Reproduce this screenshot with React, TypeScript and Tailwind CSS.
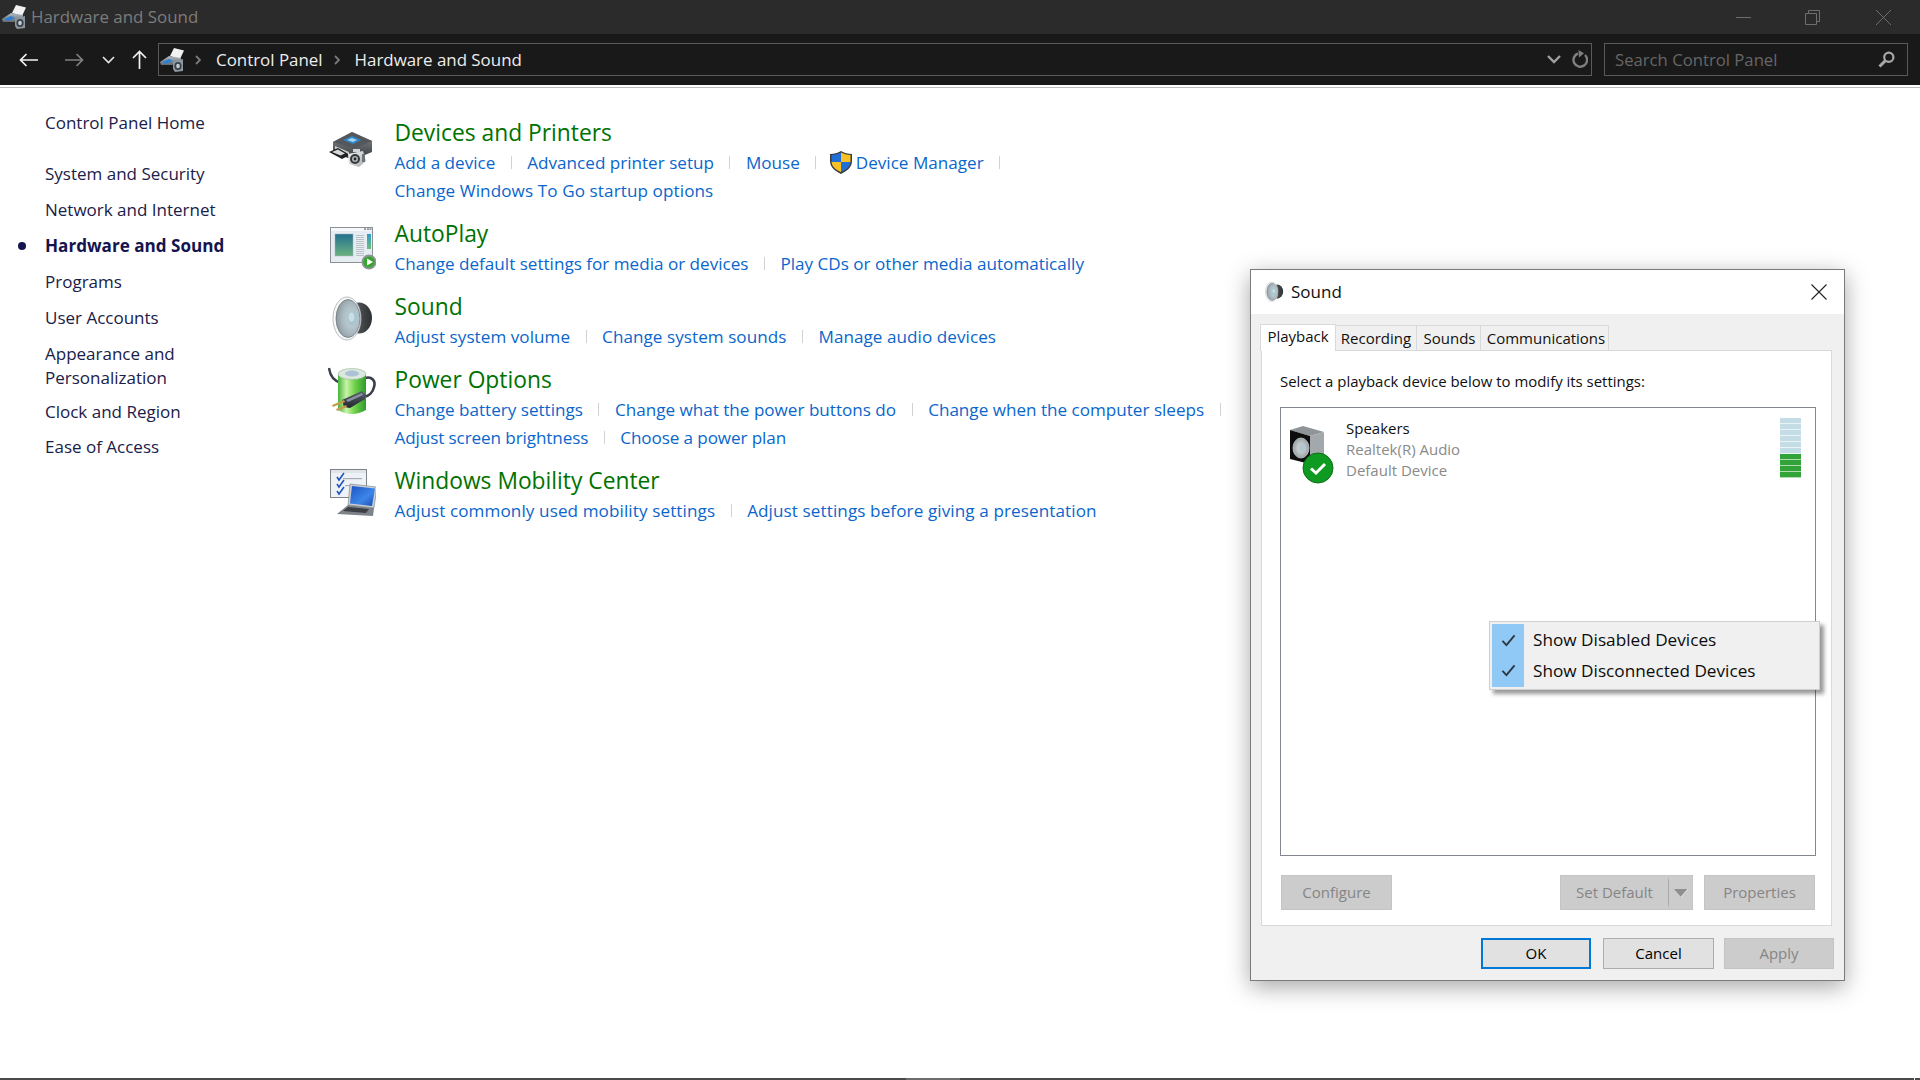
import React from "react";

function HwIcon({ id }: { id: string }) {
  return (
    <svg viewBox="0 0 24 24" className="w-6 h-6 shrink-0">
      <defs>
        <linearGradient id={id} x1="0" y1="0" x2="0" y2="1">
          <stop offset="0" stopColor="#b4bcc3" />
          <stop offset="1" stopColor="#626a72" />
        </linearGradient>
      </defs>
      <polygon points="10,8 14,0 24,2.5 20,11" fill="#f2f2f2" />
      <polygon points="0,14 9,8 21,10 21,14 12,17 1,17" fill={`url(#${id})`} />
      <polygon points="2,14 9,11 13,13 6,16" fill="#2f7fd0" />
      <polygon points="13,14 23,11 23,23 15,24 13,21" fill="#8d97a0" />
      <ellipse cx="18" cy="18" rx="3.6" ry="4" fill="#39424a" />
      <ellipse cx="18" cy="18" rx="1.8" ry="2.2" fill="#c4ccd2" />
    </svg>
  );
}

function DevicesIcon() {
  return (
    <svg viewBox="0 0 48 48" className="w-12 h-12">
      <defs>
        <linearGradient id="dv1" x1="0" y1="0" x2="0" y2="1">
          <stop offset="0" stopColor="#8b8f92" />
          <stop offset="1" stopColor="#33373a" />
        </linearGradient>
        <linearGradient id="dv2" x1="0" y1="0" x2="1" y2="1">
          <stop offset="0" stopColor="#f6f6f6" />
          <stop offset="1" stopColor="#a6abaf" />
        </linearGradient>
      </defs>
      <polygon points="5,14 24,4 44,13 44,24 25,32 5,24" fill="url(#dv1)" />
      <polygon points="5,14 24,4 44,13 26,21" fill="#54585c" />
      <polygon points="15,12 24,8 33,12 25,16" fill="#2f86c8" />
      <polygon points="19,12 24,10 29,12 25,14" fill="#a7d5ef" />
      <polygon points="7,18 21,24 21,27 7,21" fill="#c8cbcd" />
      <polygon points="1,24 10,20 22,27 14,31" fill="#1f2123" />
      <polygon points="4,24 10,21.5 17,25.5 12.5,27.5" fill="#d8d8d8" />
      <polygon points="20,26 35,23 38,33 31,39 21,36" fill="url(#dv2)" />
      <rect x="25" y="21" width="7" height="3" fill="#d2d5d7" />
      <circle cx="27" cy="31" r="5" fill="#34383b" />
      <circle cx="27" cy="31" r="3" fill="#aeb4b8" />
      <circle cx="27" cy="31" r="1.4" fill="#23272a" />
      <rect x="34" y="26" width="3" height="8" fill="#6f7477" />
    </svg>
  );
}

function AutoPlayIcon() {
  return (
    <svg viewBox="0 0 48 48" className="w-12 h-12">
      <defs>
        <linearGradient id="ap1" x1="0" y1="0" x2="0" y2="1">
          <stop offset="0" stopColor="#22708f" />
          <stop offset="1" stopColor="#6bb27f" />
        </linearGradient>
        <linearGradient id="ap2" x1="0" y1="0" x2="0" y2="1">
          <stop offset="0" stopColor="#2f9acb" />
          <stop offset="1" stopColor="#6cbf76" />
        </linearGradient>
      </defs>
      <rect x="2.5" y="3.5" width="42" height="35" fill="#e6edf2" stroke="#8b9197" />
      <rect x="3" y="4" width="41" height="3" fill="#f6f8fa" />
      <rect x="36" y="4.5" width="2" height="1.2" fill="#667" />
      <rect x="39" y="4.5" width="2" height="1.2" fill="#667" />
      <rect x="41.5" y="4.5" width="2" height="1.2" fill="#667" />
      <rect x="7" y="10" width="18" height="22" fill="url(#ap1)" stroke="#aab3b9" strokeWidth="0.5" />
      {[11, 13, 15, 17, 19, 21, 23, 25, 27, 29, 31].map((y) => (
        <rect key={y} x="28" y={y} width="8" height="1" fill="#bcc3c8" />
      ))}
      <rect x="39" y="10" width="4" height="15" fill="url(#ap2)" />
      <circle cx="41" cy="38" r="7.5" fill="#8d9498" />
      <circle cx="41" cy="38" r="5.6" fill="#35a52d" />
      <polygon points="39,34.5 45,38 39,41.5" fill="#fff" />
    </svg>
  );
}

function SoundIcon({ small }: { small?: boolean }) {
  const p = small ? "ss" : "sb";
  return (
    <svg viewBox="0 0 48 48" className={small ? "w-[22px] h-[22px] shrink-0" : "w-12 h-12"}>
      <defs>
        <radialGradient id={`${p}1`} cx="0.65" cy="0.5" r="0.75">
          <stop offset="0" stopColor="#c7d8de" />
          <stop offset="0.55" stopColor="#a7b7bd" />
          <stop offset="1" stopColor="#7f8a8e" />
        </radialGradient>
        <linearGradient id={`${p}2`} x1="0" y1="0" x2="1" y2="0">
          <stop offset="0" stopColor="#6a6e71" />
          <stop offset="1" stopColor="#2d3033" />
        </linearGradient>
      </defs>
      <ellipse cx="31" cy="23" rx="13" ry="15.5" fill={`url(#${p}2)`} />
      <ellipse cx="19" cy="23.5" rx="14" ry="21.5" fill="#f7f8f8" stroke="#a8adb0" strokeWidth="0.8" />
      <ellipse cx="20" cy="23.5" rx="12" ry="19" fill={`url(#${p}1)`} stroke="#6f7578" strokeWidth="0.7" />
      <ellipse cx="24" cy="23" rx="5" ry="7.5" fill="#a9c6d0" />
      <ellipse cx="23.5" cy="22" rx="2.8" ry="4.6" fill="#c9dee5" />
    </svg>
  );
}

function PowerIcon() {
  return (
    <svg viewBox="0 0 48 48" className="w-12 h-12">
      <defs>
        <linearGradient id="pw1" x1="0" y1="0" x2="1" y2="0">
          <stop offset="0" stopColor="#46b53c" />
          <stop offset="0.3" stopColor="#c9f3a6" />
          <stop offset="0.6" stopColor="#6fd14a" />
          <stop offset="1" stopColor="#2f9a2f" />
        </linearGradient>
        <linearGradient id="pw2" x1="0" y1="0" x2="0" y2="1">
          <stop offset="0" stopColor="#5b6270" />
          <stop offset="1" stopColor="#23262e" />
        </linearGradient>
      </defs>
      <path d="M1 1 C2 9 6 14 13 16" fill="none" stroke="#3a3f4a" strokeWidth="2.4" />
      <path d="M37 11 C44 9 48 14 46 20 C45 25 41 29 36 30" fill="none" stroke="#3a3f4a" strokeWidth="2.6" />
      <path d="M10 7 L10 43 Q24 51 38 43 L38 7 Z" fill="url(#pw1)" />
      <ellipse cx="24" cy="7" rx="14" ry="5.5" fill="#dbe8dd" stroke="#97b79a" strokeWidth="0.6" />
      <ellipse cx="24" cy="6.5" rx="7" ry="3" fill="#adc2d6" />
      <polygon points="14,33 34,24 38,28 37,32 22,41 16,40" fill="url(#pw2)" />
      <polygon points="18,33 34,26 35,28 20,35" fill="#8b92a0" />
      <polygon points="4,38 16,33 17,35 5,40" fill="#c69c4c" />
      <polygon points="8,42 18,38 19,40 9,44" fill="#c69c4c" />
    </svg>
  );
}

function MobilityIcon() {
  return (
    <svg viewBox="0 0 48 48" className="w-12 h-12">
      <defs>
        <linearGradient id="mb1" x1="0" y1="0" x2="1" y2="1">
          <stop offset="0" stopColor="#1c52c4" />
          <stop offset="0.6" stopColor="#3d86e8" />
          <stop offset="1" stopColor="#1a49b0" />
        </linearGradient>
      </defs>
      <rect x="2.5" y="1.5" width="36" height="28" fill="#eef2f6" stroke="#7d8388" />
      <rect x="3" y="2" width="35" height="3" fill="#dfe4e8" />
      <path d="M9 9 L11 12 L16 5" fill="none" stroke="#1f57bd" strokeWidth="1.6" />
      <path d="M9 16 L11 19 L16 12" fill="none" stroke="#1f57bd" strokeWidth="1.6" />
      <path d="M9 23 L11 26 L16 19" fill="none" stroke="#1f57bd" strokeWidth="1.6" />
      <rect x="15" y="10" width="19" height="1.2" fill="#a7adb3" />
      <rect x="17" y="17" width="8" height="1.2" fill="#a7adb3" />
      <polygon points="22,16 49,19 46,40 20,37" fill="#c9ced3" stroke="#7b8086" strokeWidth="0.6" />
      <polygon points="24,18 47,20.5 44,38 22,35.5" fill="url(#mb1)" />
      <polygon points="20,37 46,40 45,48 9,46" fill="#7d8389" />
      <polygon points="20,39 41,41 38,45 15,43" fill="#3c4046" />
    </svg>
  );
}

function Shield() {
  return (
    <svg viewBox="0 0 22 23" className="w-[22px] h-[23px] shrink-0 -ml-[2px] mr-[4px]">
      <path d="M11 0 C14 2 18 3 22 3 L22 10 C22 16 17 20 11 23 C5 20 0 16 0 10 L0 3 C4 3 8 2 11 0 Z" fill="#3b3b3b" />
      <path d="M11 1.5 L11 11 L1.5 11 L1.5 4 C5 4 8 3 11 1.5 Z" fill="#1f6fd6" />
      <path d="M11 1.5 C14 3 17 4 20.5 4 L20.5 11 L11 11 Z" fill="#f7c024" />
      <path d="M1.5 11 L11 11 L11 21 C6 19 2 16 1.5 11 Z" fill="#f7c024" />
      <path d="M11 11 L20.5 11 C20 16 16 19 11 21 Z" fill="#1f6fd6" />
    </svg>
  );
}

function Sep() {
  return <span className="w-px h-[13px] mx-[15.5px] bg-[#d2d2d2] shrink-0 self-center" />;
}

function LinkRow({ items, trail, shieldAt, className }: { items: string[]; trail?: boolean; shieldAt?: number; className?: string }) {
  return (
    <div className={`flex items-center h-[28px] text-[#0a66cc] text-[17.1px] leading-[27px] whitespace-nowrap ${className ?? ""}`}>
      {items.map((t, i) => (
        <React.Fragment key={t}>
          {i > 0 && <Sep />}
          {shieldAt === i && <Shield />}
          <span>{t}</span>
        </React.Fragment>
      ))}
      {trail && <Sep />}
    </div>
  );
}

function Section({ icon, iconTop, title, rows, className }: { icon: React.ReactNode; iconTop: string; title: string; rows: React.ReactNode; className?: string }) {
  return (
    <div className={`flex ${className ?? ""}`}>
      <div className={`w-[66.5px] shrink-0 ${iconTop}`}>{icon}</div>
      <div className="pb-px">
        <div className="h-[30px] leading-[29px] text-[22.8px] text-[#007200] whitespace-nowrap">{title}</div>
        {rows}
      </div>
    </div>
  );
}

function NavItem({ children, bold, className }: { children: React.ReactNode; bold?: boolean; className?: string }) {
  return (
    <div className={`relative leading-[24px] ${bold ? "text-[17.1px] font-bold text-[#14144f]" : "text-[17px] text-[#1a2048]"} ${className ?? ""}`}>
      {bold && <span className="absolute left-[-27px] top-[8px] w-2 h-2 rounded-full bg-[#14144f]" />}
      {children}
    </div>
  );
}

function DlgButton({ children, w, variant }: { children: React.ReactNode; w: string; variant: "off" | "on" | "ok" }) {
  const s = variant === "off" ? "bg-[#cccccc] border border-[#c4c4c4] text-[#858585]" : variant === "ok" ? "bg-[#e1e1e1] border-2 border-[#0078d7] text-black" : "bg-[#e1e1e1] border border-[#adadad] text-black";
  return <div className={`${w} h-full flex items-center justify-center text-[15px] ${s}`}>{children}</div>;
}

function Meter() {
  return (
    <div className="w-[21px] flex flex-col">
      {[0, 1, 2, 3, 4, 5].map((i) => (
        <div key={i} className="h-[6px] bg-[#eaf3f6]">
          <div className="h-[4.5px] bg-[#c3dce5]" />
        </div>
      ))}
      {[0, 1, 2, 3].map((i) => (
        <div key={i} className="h-[6px] bg-[#aedcb0]">
          <div className="h-[4.5px] bg-[#31a338]" />
        </div>
      ))}
    </div>
  );
}

function MenuCheck() {
  return (
    <svg viewBox="0 0 16 14" className="w-[15px] h-[13px]">
      <path d="M1.5 7.5 L5.8 12 L14.5 1.5" fill="none" stroke="#2c3640" strokeWidth="2" />
    </svg>
  );
}

export default function App() {
  return (
    <div className="relative h-screen w-full overflow-hidden bg-white flex flex-col font-['Open_Sans',sans-serif]">
      {/* title bar */}
      <div className="h-[34px] shrink-0 bg-[#2b2b2b] flex items-center pl-[2px]">
        <HwIcon id="hw1" />
        <span className="ml-[5px] text-[16.9px] text-[#7c7c7c] whitespace-nowrap">Hardware and Sound</span>
        <div className="ml-auto flex items-center text-[#6e6e6e]">
          <svg viewBox="0 0 15 15" className="w-[15px] h-[15px] mr-[54px]"><path d="M0 7.5 H15" stroke="currentColor" fill="none" /></svg>
          <svg viewBox="0 0 15 15" className="w-[15px] h-[15px] mr-[56px]"><path d="M0.5 3.5 H11.5 V14.5 H0.5 Z M3.5 3.5 V0.5 H14.5 V11.5 H11.5" stroke="currentColor" fill="none" /></svg>
          <svg viewBox="0 0 15 15" className="w-[15px] h-[15px] mr-[29px]"><path d="M0 0 L15 15 M15 0 L0 15" stroke="currentColor" fill="none" /></svg>
        </div>
      </div>
      {/* address bar */}
      <div className="h-[51px] shrink-0 bg-[#191919] flex items-center pl-[19px] pr-[12px]">
        <svg viewBox="0 0 19 14" className="w-[19px] h-[14px]"><path d="M19 7 H1.5 M7.5 1 L1.5 7 L7.5 13" stroke="#f2f2f2" strokeWidth="1.7" fill="none" /></svg>
        <svg viewBox="0 0 19 14" className="w-[19px] h-[14px] ml-[27px]"><path d="M0 7 H17.5 M11.5 1 L17.5 7 L11.5 13" stroke="#808080" strokeWidth="1.7" fill="none" /></svg>
        <svg viewBox="0 0 13 8" className="w-[13px] h-[8px] ml-[18px]"><path d="M1 1 L6.5 6.5 L12 1" stroke="#e6e6e6" strokeWidth="1.6" fill="none" /></svg>
        <svg viewBox="0 0 15 19" className="w-[15px] h-[19px] ml-[17px]"><path d="M7.5 19 V1.5 M1 8 L7.5 1.5 L14 8" stroke="#f2f2f2" strokeWidth="1.7" fill="none" /></svg>
        <div className="ml-[11px] flex-1 h-[33px] border border-[#5a5a5a] flex items-center pl-px text-[#ededed] text-[16.9px] whitespace-nowrap">
          <HwIcon id="hw2" />
          <svg viewBox="0 0 6 10" className="w-[6px] h-[10px] ml-[11px]"><path d="M1 1 L5 5 L1 9" stroke="#7a7a7a" strokeWidth="1.8" fill="none" /></svg>
          <span className="ml-[15px]">Control Panel</span>
          <svg viewBox="0 0 6 10" className="w-[6px] h-[10px] ml-[11px]"><path d="M1 1 L5 5 L1 9" stroke="#7a7a7a" strokeWidth="1.8" fill="none" /></svg>
          <span className="ml-[15px]">Hardware and Sound</span>
          <div className="ml-auto flex items-center">
            <svg viewBox="0 0 14 9" className="w-[14px] h-[9px] mr-[10px]"><path d="M1 1 L7 7 L13 1" stroke="#a0a0a0" strokeWidth="2.4" fill="none" /></svg>
            <svg viewBox="0 0 17 19" className="w-[17px] h-[19px] mr-[3px]"><path d="M7 3.5 A6.8 6.8 0 1 0 14 5" stroke="#7f7f7f" strokeWidth="2.4" fill="none" /><polygon points="7.5,0 13,3.2 8,7.5" fill="#7f7f7f" /></svg>
          </div>
        </div>
        <div className="ml-[12px] w-[304px] h-[33px] border border-[#5a5a5a] flex items-center pl-[10px] pr-[12px] text-[16.7px] text-[#666666] whitespace-nowrap">
          <span>Search Control Panel</span>
          <svg viewBox="0 0 17 17" className="w-[17px] h-[17px] ml-auto"><circle cx="10.8" cy="6.2" r="4.6" stroke="#a8a8a8" strokeWidth="2.2" fill="none" /><path d="M7.4 9.6 L1.5 15.5" stroke="#a8a8a8" strokeWidth="3" /></svg>
        </div>
      </div>
      <div className="h-[3px] shrink-0 bg-white border-b border-[#bdbdbd]" />
      {/* content */}
      <div className="flex-1 min-h-0 flex">
        <div className="w-[328px] shrink-0 pl-[45px] pt-[23px]">
          <NavItem>Control Panel Home</NavItem>
          <NavItem className="mt-[27px]">System and Security</NavItem>
          <NavItem className="mt-[12px]">Network and Internet</NavItem>
          <NavItem bold className="mt-[12px]">Hardware and Sound</NavItem>
          <NavItem className="mt-[12px]">Programs</NavItem>
          <NavItem className="mt-[12px]">User Accounts</NavItem>
          <NavItem className="mt-[12px]">Appearance and<br />Personalization</NavItem>
          <NavItem className="mt-[10px]">Clock and Region</NavItem>
          <NavItem className="mt-[11px]">Ease of Access</NavItem>
        </div>
        <div className="flex-1 pt-[30px]">
          <Section icon={<DevicesIcon />} iconTop="mt-[10px]" title="Devices and Printers" rows={<>
            <LinkRow items={["Add a device", "Advanced printer setup", "Mouse", "Device Manager"]} shieldAt={3} trail />
            <LinkRow className="tracking-[0.1px]" items={["Change Windows To Go startup options"]} />
          </>} />
          <Section className="mt-[14px]" icon={<AutoPlayIcon />} iconTop="mt-[5px]" title="AutoPlay" rows={
            <LinkRow items={["Change default settings for media or devices", "Play CDs or other media automatically"]} />
          } />
          <Section className="mt-[14px]" icon={<SoundIcon />} iconTop="mt-[3px]" title="Sound" rows={
            <LinkRow className="tracking-[0.05px]" items={["Adjust system volume", "Change system sounds", "Manage audio devices"]} />
          } />
          <Section className="mt-[14px]" icon={<PowerIcon />} iconTop="mt-[2px]" title="Power Options" rows={<>
            <LinkRow items={["Change battery settings", "Change what the power buttons do", "Change when the computer sleeps"]} trail />
            <LinkRow className="tracking-[-0.1px]" items={["Adjust screen brightness", "Choose a power plan"]} />
          </>} />
          <Section className="mt-[14px]" icon={<MobilityIcon />} iconTop="mt-[2px]" title="Windows Mobility Center" rows={
            <LinkRow className="tracking-[0.1px]" items={["Adjust commonly used mobility settings", "Adjust settings before giving a presentation"]} />
          } />
        </div>
      </div>
      {/* bottom edge */}
      <div className="h-[2px] shrink-0 flex bg-[#4a4a4a]">
        <div className="ml-[906px] w-[54px] bg-[#6c6c6c]" />
        <div className="ml-auto mr-[5px] w-px bg-white" />
      </div>

      {/* Sound dialog */}
      <div className="absolute left-[1250px] top-[269px] w-[595px] h-[712px] border border-[#7a7a7a] bg-[#f0f0f0] shadow-[0_6px_22px_rgba(0,0,0,0.35)] flex flex-col">
        <div className="h-[44px] shrink-0 bg-white flex items-center pl-[12px] pr-[17px]">
          <SoundIcon small />
          <span className="ml-[6px] text-[17px] text-[#101010]">Sound</span>
          <svg viewBox="0 0 16 16" className="w-4 h-4 ml-auto"><path d="M0.5 0.5 L15.5 15.5 M15.5 0.5 L0.5 15.5" stroke="#222" strokeWidth="1.1" fill="none" /></svg>
        </div>
        <div className="flex items-end h-[36px] shrink-0 pl-[9px] text-[15px] text-[#101010]">
          <div className="relative z-10 w-[76px] h-[27px] -mb-px pb-[3px] bg-white border border-b-0 border-[#d9d9d9] flex items-center justify-center">Playback</div>
          <div className="w-[81px] h-[25px] bg-[#f0f0f0] border-t border-r border-[#d9d9d9] flex items-center justify-center">Recording</div>
          <div className="w-[64px] h-[25px] pl-[2px] bg-[#f0f0f0] border-t border-r border-[#d9d9d9] flex items-center justify-center">Sounds</div>
          <div className="w-[128px] h-[25px] pl-[3px] bg-[#f0f0f0] border-t border-r border-[#d9d9d9] flex items-center justify-center">Communications</div>
        </div>
        <div className="ml-[10px] w-[571px] h-[576px] shrink-0 bg-white border border-[#d9d9d9] pl-[18px] pt-[18px] text-[#101010]">
          <div className="leading-[24px] text-[14.95px] whitespace-nowrap">Select a playback device below to modify its settings:</div>
          <div className="mt-[14px] w-[536px] h-[449px] border border-[#828790] bg-white relative flex items-start">
            <svg viewBox="0 0 50 62" className="w-[50px] h-[62px] ml-[6px] mt-[15px] shrink-0">
              <defs>
                <radialGradient id="sp1" cx="0.5" cy="0.5" r="0.6">
                  <stop offset="0" stopColor="#dfe6e8" />
                  <stop offset="1" stopColor="#8d9497" />
                </radialGradient>
              </defs>
              <polygon points="3,7 16,3 37,9 23,13" fill="#8f9498" />
              <polygon points="23,13 37,9 37,36 23,41" fill="#a3a8ac" />
              <polygon points="3,7 23,13 23,41 3,36" fill="#0d0d0d" />
              <ellipse cx="14" cy="25" rx="8" ry="10" fill="url(#sp1)" stroke="#c7cdd0" strokeWidth="0.8" />
              <ellipse cx="15" cy="25" rx="3" ry="4.5" fill="#b4c6cd" />
              <circle cx="31" cy="45" r="15" fill="#0f9a22" stroke="#0b6f18" strokeWidth="1" />
              <path d="M24 45.5 L29 50 L38 41" fill="none" stroke="#fff" strokeWidth="3" />
            </svg>
            <div className="ml-[9px] mt-[10px] text-[15px] leading-[21px] whitespace-nowrap">
              <div>Speakers</div>
              <div className="text-[#8a8a8a]">Realtek(R) Audio</div>
              <div className="text-[#8a8a8a]">Default Device</div>
            </div>
            <div className="ml-auto mr-[14px] mt-[10px]"><Meter /></div>
          </div>
          <div className="mt-[19px] ml-px w-[534px] h-[35px] flex">
            <DlgButton w="w-[111px]" variant="off">Configure</DlgButton>
            <div className="ml-auto w-[133px] h-full bg-[#cccccc] border border-[#c4c4c4] flex items-center text-[15px] text-[#858585]">
              <span className="flex-1 text-center">Set Default</span>
              <span className="w-[24px] h-full border-l border-l-[#a8a8a8] border-y-[6px] border-y-[#cccccc] flex items-center justify-center">
                <svg viewBox="0 0 14 8" className="w-[14px] h-[8px]"><polygon points="0,0 14,0 7,8" fill="#8f8f8f" /><path d="M7 8 L14 0" stroke="#e8e8e8" strokeWidth="1" /></svg>
              </span>
            </div>
            <div className="ml-[11px] h-full"><DlgButton w="w-[111px]" variant="off">Properties</DlgButton></div>
          </div>
        </div>
        <div className="mt-[12px] h-[31px] flex justify-end pr-[10px]">
          <DlgButton w="w-[110px]" variant="ok">OK</DlgButton>
          <div className="ml-[12px] h-full"><DlgButton w="w-[111px]" variant="on">Cancel</DlgButton></div>
          <div className="ml-[10px] h-full"><DlgButton w="w-[110px]" variant="off">Apply</DlgButton></div>
        </div>
        {/* context menu */}
        <div className="absolute left-[238px] top-[351px] w-[331px] h-[69px] bg-[#f0f0f0] border border-[#cfcfcf] p-[2px] shadow-[4px_4px_4px_rgba(0,0,0,0.4)] flex text-[17.2px] text-[#0c0c0c] whitespace-nowrap">
          <div className="w-[32px] h-full bg-[#90c8f6] flex flex-col items-center justify-around py-[2px]">
            <MenuCheck />
            <MenuCheck />
          </div>
          <div className="ml-[9px] flex flex-col justify-around h-full">
            <div>Show Disabled Devices</div>
            <div>Show Disconnected Devices</div>
          </div>
        </div>
      </div>
    </div>
  );
}
